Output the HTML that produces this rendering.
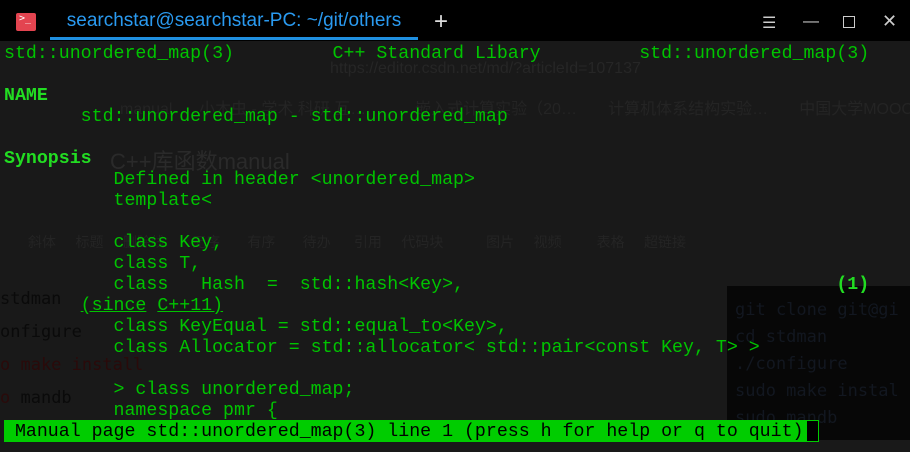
<!DOCTYPE html>
<html><head><meta charset="utf-8"><style>
html,body{margin:0;padding:0;}
body{width:910px;height:452px;overflow:hidden;background:#191919;position:relative;font-family:"DejaVu Sans Mono","Liberation Mono",monospace;}
.bg{position:absolute;font-family:"Liberation Sans","Noto Sans CJK SC",sans-serif;color:#262626;white-space:nowrap;}
#tabbar{position:absolute;left:0;top:0;width:910px;height:41px;background:#000;}
#tab{position:absolute;left:50px;top:0;width:368px;height:37px;border-bottom:3px solid #1f8fe0;color:#2a9af0;font-family:"Liberation Sans",sans-serif;font-size:19px;line-height:42px;text-align:center;}
#logo{position:absolute;left:16px;top:13px;width:20px;height:18px;background:#e34450;border-radius:2px;color:#fff;font-size:10px;line-height:12px;padding-left:3px;box-sizing:border-box;}
.win{position:absolute;top:13px;color:#ccc;font-family:"Liberation Sans",sans-serif;font-size:16px;}
pre{position:absolute;left:4px;top:44px;margin:0;font-size:18.25px;line-height:21px;color:#00c400;}
b{color:#22dd22;}
u{text-decoration:underline;}
#status{position:absolute;left:4px;top:420px;width:802px;height:22px;background:#00cc00;}
#cur{position:absolute;left:806px;top:420px;width:11px;height:20px;border:1px solid #00cc00;background:#000;}
#box{position:absolute;left:727px;top:286px;width:183px;height:154px;background:#070707;}
</style></head><body>
<div id="box"></div>
<div class="bg" style="left:110px;top:144px;font-size:22px;color:#2a2a2a">C++库函数manual</div>
<div class="bg" style="left:330px;top:60px;font-size:16px;color:#262626">https://editor.csdn.net/md/?articleId=107137</div>
<div class="bg" style="left:120px;top:95px;font-size:16px;color:#242424">manual &nbsp;&nbsp;&nbsp;&nbsp; 小木虫 - 学术 科研 互… &nbsp;&nbsp;&nbsp;&nbsp;&nbsp;&nbsp;&nbsp;&nbsp;&nbsp; 嵌入式计算实验（20… &nbsp;&nbsp;&nbsp;&nbsp;&nbsp; 计算机体系结构实验… &nbsp;&nbsp;&nbsp;&nbsp;&nbsp; 中国大学MOOC</div>
<div class="bg" style="left:28px;top:232px;font-size:14px;color:#242424">斜体 &nbsp;&nbsp;&nbsp; 标题 &nbsp;&nbsp;&nbsp; 删除线 &nbsp;&nbsp;&nbsp;&nbsp;&nbsp; 无序 &nbsp;&nbsp;&nbsp;&nbsp;&nbsp; 有序 &nbsp;&nbsp;&nbsp;&nbsp;&nbsp; 待办 &nbsp;&nbsp;&nbsp;&nbsp; 引用 &nbsp;&nbsp;&nbsp; 代码块 &nbsp;&nbsp;&nbsp;&nbsp;&nbsp;&nbsp;&nbsp;&nbsp;&nbsp; 图片 &nbsp;&nbsp;&nbsp; 视频 &nbsp;&nbsp;&nbsp;&nbsp;&nbsp;&nbsp;&nbsp; 表格 &nbsp;&nbsp;&nbsp; 超链接</div>
<div class="bg" style="left:0px;top:283px;font-size:17px;color:#0a0a0a;font-family:'DejaVu Sans Mono',monospace;line-height:33px">stdman<br>onfigure<br><span style="color:#2a0a0a">o make install</span><br><span style="color:#2a0a0a">o</span> mandb</div>
<div class="bg" style="left:735px;top:297px;font-size:17px;color:#121720;font-family:'DejaVu Sans Mono',monospace;line-height:27px">git clone git@gi<br>cd stdman<br>./configure<br>sudo make instal<br>sudo mandb</div>
<div id="tabbar">
<div id="logo">&gt;_</div>
<div id="tab">searchstar@searchstar-PC: ~/git/others</div>
<div class="win" style="left:434px;top:8px;font-size:24px;color:#ddd">+</div>
<div class="win" style="left:762px">☰</div>
<div class="win" style="left:803px">—</div>
<div class="win" style="left:843px;width:10px;height:10px;border:1px solid #ccc;top:16px"></div>
<div class="win" style="left:882px;font-size:18px;top:11px">✕</div>
</div>
<pre>std::unordered_map(3)         C++ Standard Libary         std::unordered_map(3)

<b>NAME</b>
       std::unordered_map - std::unordered_map

<b>Synopsis</b>
          Defined in header &lt;unordered_map&gt;
          template&lt;

          class Key,
          class T,
          class   Hash  =  std::hash&lt;Key&gt;,                                  <b>(1)</b>
       <u>(since</u> <u>C++11)</u>
          class KeyEqual = std::equal_to&lt;Key&gt;,
          class Allocator = std::allocator&lt; std::pair&lt;const Key, T&gt; &gt;

          &gt; class unordered_map;
          namespace pmr {</pre>
<div id="status"></div>
<div id="cur"></div>
<pre style="top:421px;color:#000;line-height:22px"> Manual page std::unordered_map(3) line 1 (press h for help or q to quit)</pre>
</body></html>
